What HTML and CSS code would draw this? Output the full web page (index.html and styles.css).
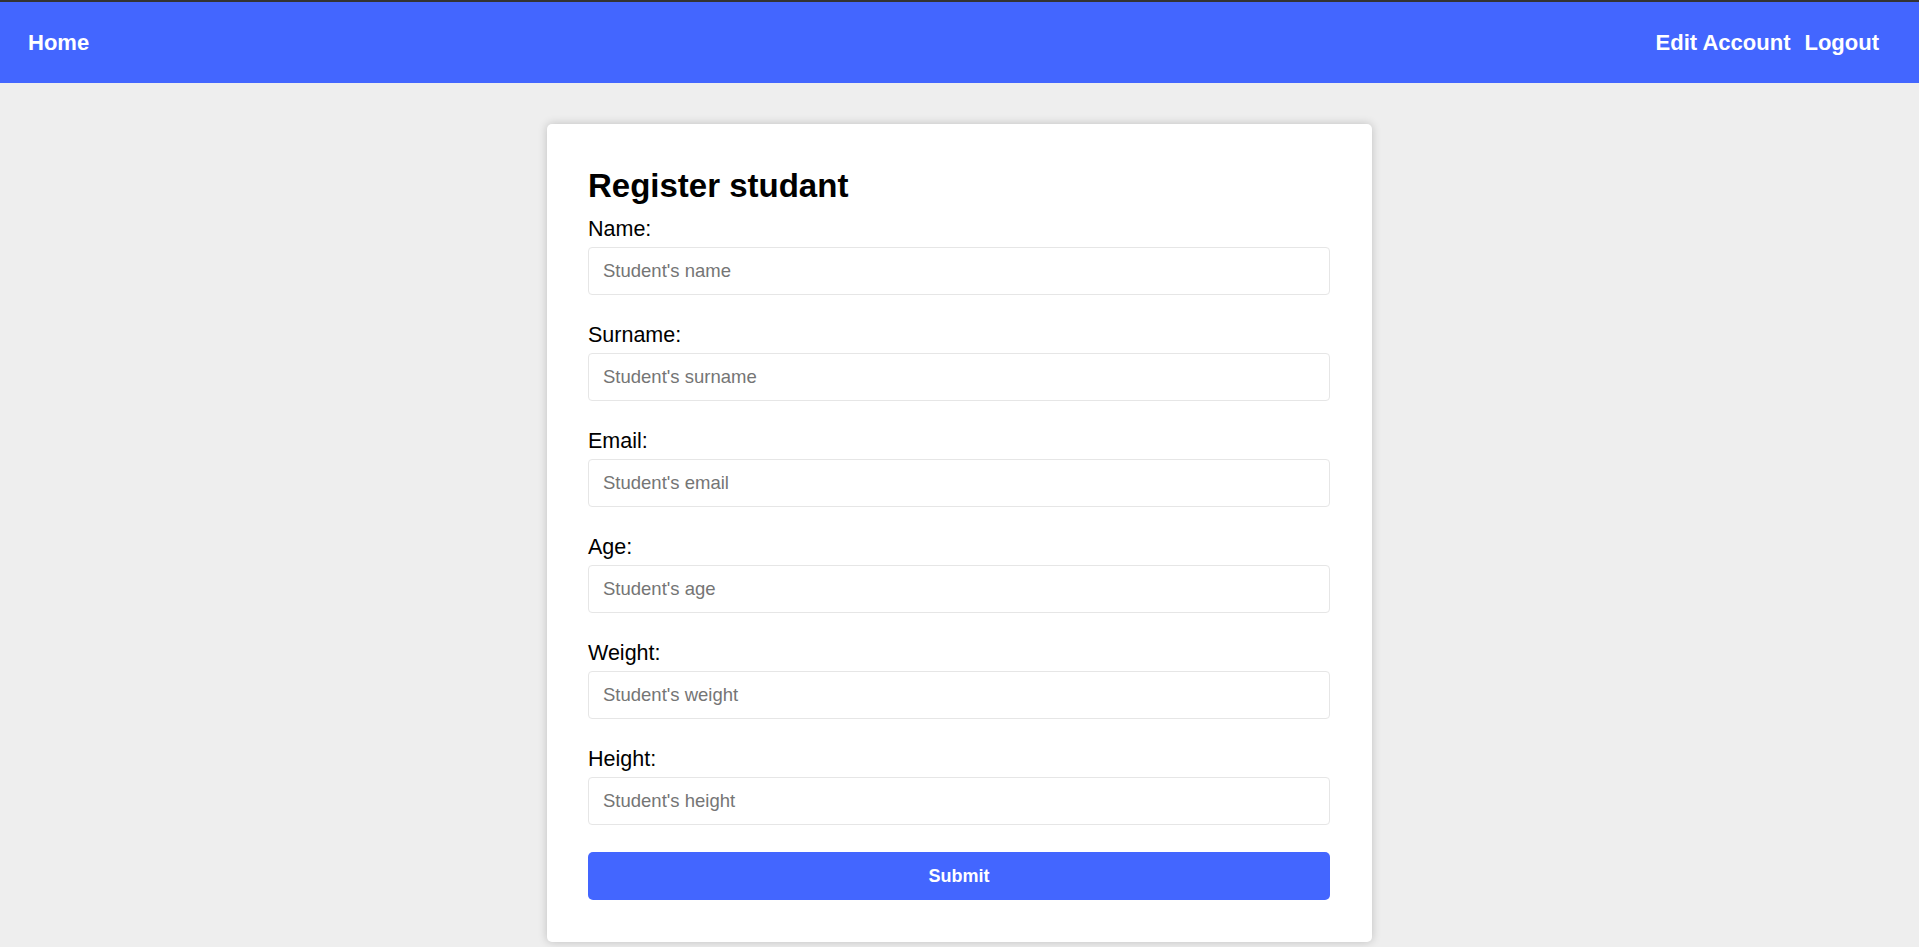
FILE: index.html
```html
<!DOCTYPE html>
<html lang="en">
<head>
<meta charset="utf-8">
<title>Register student</title>
<link rel="stylesheet" href="styles.css">
</head>
<body>
<header class="topbar">
  <a class="nav-link" href="#">Home</a>
  <nav class="nav-right">
    <a class="nav-link" href="#">Edit Account</a>
    <a class="nav-link" href="#">Logout</a>
  </nav>
</header>
<main class="page">
  <section class="card">
    <h1 class="card-title">Register studant</h1>
    <form class="form">
      <div class="field">
        <label class="field-label" for="name">Name:</label>
        <input class="field-input" id="name" type="text" placeholder="Student's name">
      </div>
      <div class="field">
        <label class="field-label" for="surname">Surname:</label>
        <input class="field-input" id="surname" type="text" placeholder="Student's surname">
      </div>
      <div class="field">
        <label class="field-label" for="email">Email:</label>
        <input class="field-input" id="email" type="text" placeholder="Student's email">
      </div>
      <div class="field">
        <label class="field-label" for="age">Age:</label>
        <input class="field-input" id="age" type="text" placeholder="Student's age">
      </div>
      <div class="field">
        <label class="field-label" for="weight">Weight:</label>
        <input class="field-input" id="weight" type="text" placeholder="Student's weight">
      </div>
      <div class="field">
        <label class="field-label" for="height">Height:</label>
        <input class="field-input" id="height" type="text" placeholder="Student's height">
      </div>
      <button class="submit" type="button">Submit</button>
    </form>
  </section>
</main>
</body>
</html>
```

FILE: styles.css
```css
* {
  box-sizing: border-box;
}

html, body {
  margin: 0;
  padding: 0;
}

body {
  background: #eeeeee;
  font-family: "Liberation Sans", Arial, sans-serif;
  color: #000;
  min-height: 947px;
}

.topbar {
  border-top: 2px solid #333333;
  background: #4366ff;
  height: 83px;
  display: flex;
  align-items: center;
  justify-content: space-between;
  padding: 0 40px 0 28px;
}

.nav-right {
  display: flex;
  gap: 14px;
}

.nav-link {
  color: #ffffff;
  text-decoration: none;
  font-weight: bold;
  font-size: 22px;
  line-height: 25px;
}

.page {
  padding-top: 41px;
}

.card {
  width: 825px;
  margin: 0 auto;
  background: #ffffff;
  border-radius: 5px;
  box-shadow: 0 0 10px rgba(0, 0, 0, 0.2);
  padding: 41px 42px 42px 41px;
}

.card-title {
  font-size: 33px;
  line-height: 37px;
  font-weight: bold;
  margin: 2px 0 14px;
}

.form {
  display: flex;
  flex-direction: column;
}

.field {
  display: flex;
  flex-direction: column;
}

.field + .field {
  margin-top: 29px;
}

.field-label {
  font-size: 21.5px;
  line-height: 23px;
  margin-bottom: 6px;
}

.field-input {
  height: 48px;
  width: 100%;
  border: 1px solid #e6e6e6;
  border-radius: 4px;
  padding: 0 14px;
  font-family: "Liberation Sans", Arial, sans-serif;
  font-size: 18.5px;
  color: #000;
  background: #fff;
  outline: none;
}

.field-input::placeholder {
  color: #757575;
}

.submit {
  margin-top: 27px;
  height: 48px;
  width: 100%;
  border: none;
  border-radius: 5px;
  background: #4366ff;
  color: #ffffff;
  font-family: "Liberation Sans", Arial, sans-serif;
  font-weight: bold;
  font-size: 18px;
  cursor: pointer;
}
```
